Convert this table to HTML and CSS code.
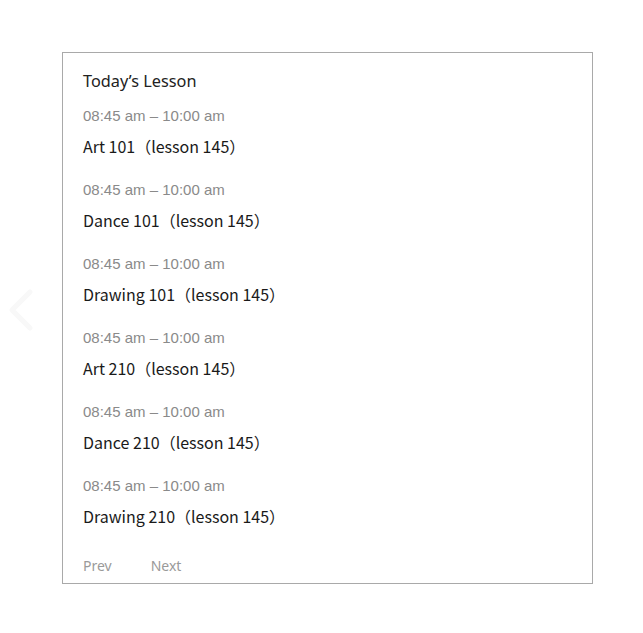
FILE: index.html
```html
<!DOCTYPE html>
<html>
<head>
<meta charset="utf-8">
<link rel="stylesheet" href="styles.css">
</head>
<body>
<div class="page">
  <svg class="chevron" width="30" height="44" viewBox="0 0 30 44"><path d="M26 4 L8 22 L26 40" fill="none" stroke="#f8f8f8" stroke-width="5" stroke-linecap="round" stroke-linejoin="round"/></svg>
  <div class="card">
    <div class="title">Today’s Lesson</div>
    <ul class="list">
      <li class="item"><div class="time">08:45 am – 10:00 am</div><div class="name">Art 101（lesson 145）</div></li>
      <li class="item"><div class="time">08:45 am – 10:00 am</div><div class="name">Dance 101（lesson 145）</div></li>
      <li class="item"><div class="time">08:45 am – 10:00 am</div><div class="name">Drawing 101（lesson 145）</div></li>
      <li class="item"><div class="time">08:45 am – 10:00 am</div><div class="name">Art 210（lesson 145）</div></li>
      <li class="item"><div class="time">08:45 am – 10:00 am</div><div class="name">Dance 210（lesson 145）</div></li>
      <li class="item"><div class="time">08:45 am – 10:00 am</div><div class="name">Drawing 210（lesson 145）</div></li>
    </ul>
    <div class="pager"><span>Prev</span><span>Next</span></div>
  </div>
</div>
</body>
</html>
```
FILE: styles.css
```css
html, body { margin: 0; padding: 0; background: #fff; }
.page { position: relative; padding: 52px 0 0 62px; }
.chevron { position: absolute; left: 4px; top: 288px; }
.card {
  box-sizing: border-box;
  width: 531px;
  height: 532px;
  border: 1px solid #a9a9a9;
  padding: 16px 20px 0 20px;
  font-family: "Noto Sans CJK SC", "Noto Sans", sans-serif;
}
.title { font-family: "Noto Sans", sans-serif; font-size: 16.3px; line-height: 24px; color: #222; }
.list { list-style: none; margin: 13px 0 0 0; padding: 0; display: flex; flex-direction: column; gap: 22px; }
.time { font-family: "Liberation Sans", Arial, sans-serif; font-size: 15px; line-height: 20px; color: #8a8a8a; }
.name { margin-top: 8px; font-size: 16px; line-height: 24px; color: #1a1a1a; }
.pager { margin-top: 28px; display: flex; gap: 39px; font-family: "Noto Sans", sans-serif; font-size: 14px; line-height: 20px; color: #9a9a9a; }
```
